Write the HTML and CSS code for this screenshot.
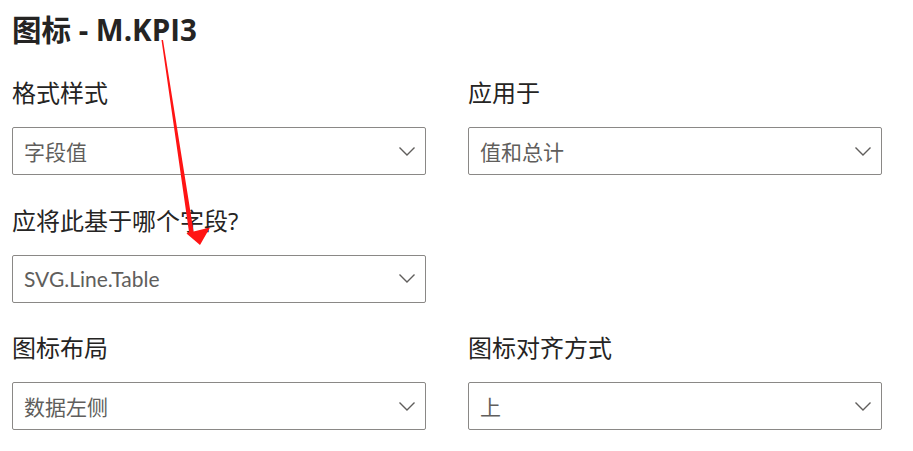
FILE: index.html
```html
<!DOCTYPE html>
<html lang="zh-CN">
<head>
<meta charset="utf-8">
<title>图标 - M.KPI3</title>
<link rel="stylesheet" href="styles.css">
</head>
<body>
<div class="page">
  <h1 class="title">图标 - M.KPI3</h1>
  <div class="grid">
    <div class="field">
      <div class="label">格式样式</div>
      <div class="select"><span class="value">字段值</span><svg class="chev" viewBox="0 0 16 9" width="16" height="9"><path d="M0.5 0.5 L8 8 L15.5 0.5" /></svg></div>
    </div>
    <div class="field">
      <div class="label">应用于</div>
      <div class="select"><span class="value">值和总计</span><svg class="chev" viewBox="0 0 16 9" width="16" height="9"><path d="M0.5 0.5 L8 8 L15.5 0.5" /></svg></div>
    </div>
    <div class="field">
      <div class="label">应将此基于哪个字段?</div>
      <div class="select"><span class="value">SVG.Line.Table</span><svg class="chev" viewBox="0 0 16 9" width="16" height="9"><path d="M0.5 0.5 L8 8 L15.5 0.5" /></svg></div>
    </div>
    <div class="field empty"></div>
    <div class="field">
      <div class="label">图标布局</div>
      <div class="select"><span class="value">数据左侧</span><svg class="chev" viewBox="0 0 16 9" width="16" height="9"><path d="M0.5 0.5 L8 8 L15.5 0.5" /></svg></div>
    </div>
    <div class="field">
      <div class="label">图标对齐方式</div>
      <div class="select"><span class="value">上</span><svg class="chev" viewBox="0 0 16 9" width="16" height="9"><path d="M0.5 0.5 L8 8 L15.5 0.5" /></svg></div>
    </div>
  </div>
  <svg class="annot" width="913" height="451" viewBox="0 0 913 451">
    <polygon points="161.5,40 163,40 193.6,231.5 210,227.5 200,245 186.5,233.5 189,232 " fill="#ff1414"/>
  </svg>
</div>
</body>
</html>
```

FILE: styles.css
```css
html, body {
  margin: 0;
  padding: 0;
  background: #ffffff;
}

body {
  font-family: "Open Sans", "Noto Sans CJK SC", sans-serif;
  color: #252423;
}

.page {
  position: relative;
  width: 913px;
  height: 451px;
  padding: 10px 31px 0 12px;
  box-sizing: border-box;
  overflow: hidden;
}

.title {
  margin: 0;
  font-size: 29.5px;
  line-height: 40px;
  font-weight: 700;
  color: #252423;
}

.grid {
  margin-top: 27px;
  display: grid;
  grid-template-columns: 414px 414px;
  column-gap: 42px;
  row-gap: 29.5px;
}

.label {
  font-size: 24px;
  line-height: 32px;
  height: 32px;
  margin-bottom: 18px;
  color: #252423;
  white-space: nowrap;
}

.select {
  height: 48px;
  box-sizing: border-box;
  border: 1px solid #8a8886;
  border-radius: 2px;
  display: flex;
  align-items: center;
  padding: 0 10px 0 11px;
}

.value {
  flex: 1;
  font-family: "Lato", "Noto Sans CJK SC", sans-serif;
  font-size: 21px;
  color: #605e5c;
  white-space: nowrap;
}

.chev {
  flex: none;
  fill: none;
  stroke: #605e5c;
  stroke-width: 1.4;
}

.annot {
  position: absolute;
  left: 0;
  top: 0;
  pointer-events: none;
}
```
